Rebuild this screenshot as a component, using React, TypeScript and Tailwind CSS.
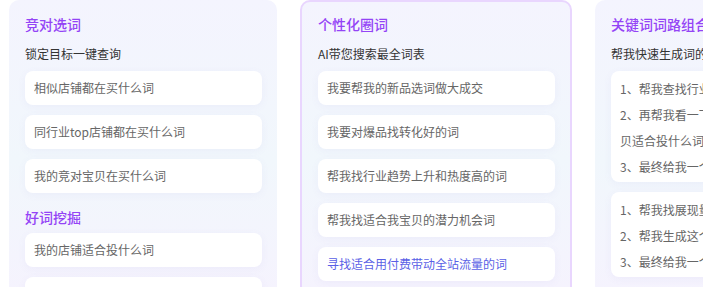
const font = { fontFamily: '"Noto Sans CJK SC", "Noto Sans", sans-serif' };

const Item = ({ text, active }: { text: string; active?: boolean }) => (
  <div
    className={`flex h-[34px] items-center rounded-[8px] bg-white pl-[9px] text-[12px] whitespace-nowrap shadow-[0_2px_8px_rgba(120,110,200,0.06)] ${
      active ? "text-[#5a5fe6]" : "text-[#666666]"
    }`}
  >
    {text}
  </div>
);

const Title = ({ children, className = "" }: { children: string; className?: string }) => (
  <div className={`h-5 text-[14px] leading-5 font-medium whitespace-nowrap text-[#9444f6] ${className}`}>
    {children}
  </div>
);

const Sub = ({ children }: { children: string }) => (
  <div className="mt-[11px] h-[18px] text-[12px] leading-[18px] whitespace-nowrap text-[#333333]">
    {children}
  </div>
);

const cardBg = "bg-gradient-to-b from-[#f4f4fe] via-[#f1f7fc] to-[#f6f2fe]";

export default function App() {
  return (
    <div className="h-[287px] w-[703px] overflow-hidden bg-white" style={font}>
      <div className="flex gap-[23px] pl-[9px]">
        <div className={`h-[320px] w-[268px] shrink-0 rounded-[10px] pt-[14px] pr-[15px] pl-4 ${cardBg}`}>
          <Title>竞对选词</Title>
          <Sub>锁定目标一键查询</Sub>
          <div className="mt-2 flex flex-col gap-[10px]">
            <Item text="相似店铺都在买什么词" />
            <Item text="同行业top店铺都在买什么词" />
            <Item text="我的竞对宝贝在买什么词" />
          </div>
          <Title className="mt-[14px]">好词挖掘</Title>
          <div className="mt-[6px] flex flex-col gap-[10px]">
            <Item text="我的店铺适合投什么词" />
            <Item text="我的宝贝适合投什么词" />
          </div>
        </div>

        <div
          className={`h-[320px] w-[272px] shrink-0 rounded-[10px] border-2 border-[#e9d6fe] pt-[12px] pr-[15px] pl-4 ${cardBg}`}
        >
          <Title>个性化圈词</Title>
          <Sub>AI带您搜索最全词表</Sub>
          <div className="mt-2 flex flex-col gap-[10px]">
            <Item text="我要帮我的新品选词做大成交" />
            <Item text="我要对爆品找转化好的词" />
            <Item text="帮我找行业趋势上升和热度高的词" />
            <Item text="帮我找适合我宝贝的潜力机会词" />
            <Item text="寻找适合用付费带动全站流量的词" active />
          </div>
        </div>

        <div className={`h-[320px] w-[268px] shrink-0 rounded-[10px] pt-[14px] pr-[15px] pl-4 ${cardBg}`}>
          <Title>关键词词路组合</Title>
          <Sub>帮我快速生成词的组合词路</Sub>
          <div className="mt-2 flex flex-col gap-[10px]">
            <div className="rounded-[8px] bg-white pt-[5px] pr-2 pb-[2px] pl-[9px] text-[12px] leading-[26px] whitespace-nowrap text-[#666666] shadow-[0_2px_8px_rgba(120,110,200,0.06)]">
              <div>1、帮我查找行业热搜词</div>
              <div>2、再帮我看一下我的店铺和宝</div>
              <div>贝适合投什么词</div>
              <div>3、最终给我一个词路组合</div>
            </div>
            <div className="rounded-[8px] bg-white pt-[5px] pr-2 pb-[2px] pl-[9px] text-[12px] leading-[26px] whitespace-nowrap text-[#666666] shadow-[0_2px_8px_rgba(120,110,200,0.06)]">
              <div>1、帮我找展现量高的词</div>
              <div>2、帮我生成这个词的词路</div>
              <div>3、最终给我一个投放方案</div>
            </div>
          </div>
        </div>
      </div>
    </div>
  );
}
